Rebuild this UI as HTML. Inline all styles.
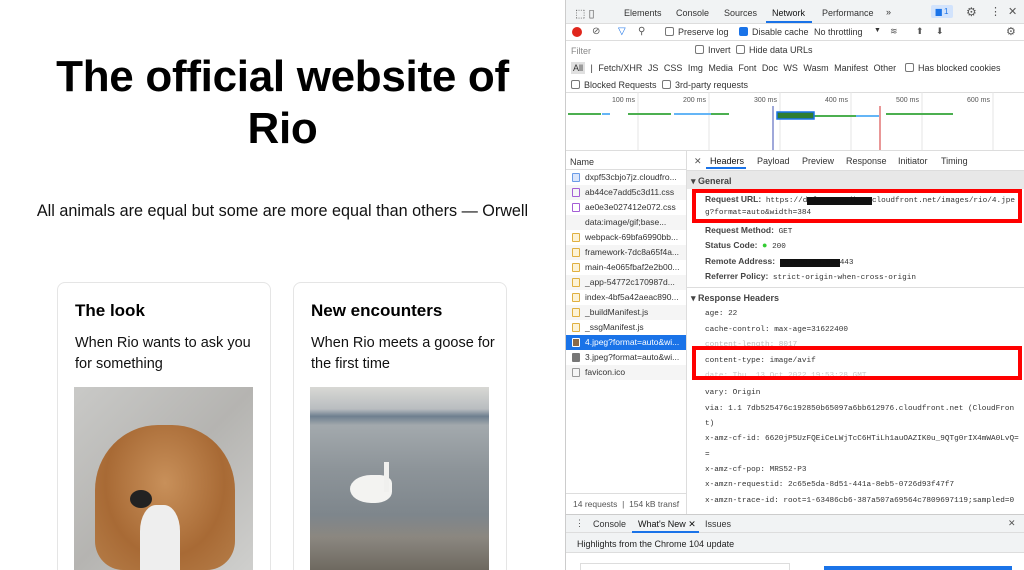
<!DOCTYPE html>
<html><head><meta charset="utf-8"><style>
*{margin:0;padding:0;box-sizing:border-box}
html,body{width:1024px;height:570px;overflow:hidden}
body{background:#fff;font-family:"Liberation Sans",sans-serif;position:relative;color:#202124}
.a{position:absolute;white-space:nowrap}
.h1{left:0;width:565px;text-align:center;font-weight:bold;font-size:44px;color:#000;letter-spacing:-0.3px}
.card{position:absolute;top:282px;width:214px;height:300px;border:1px solid #e5e5e5;border-radius:8px;background:#fff}
.card h3{position:absolute;left:17px;top:18px;font-size:17px;font-weight:bold;color:#000}
.card p{position:absolute;left:17px;top:50px;font-size:14.5px;line-height:21px;color:#111;width:190px}
.dt{font-size:9px;color:#333}
.cb{display:inline-block;width:9px;height:9px;border:1px solid #777;border-radius:2px;vertical-align:-1px;margin-right:4px}
.row{position:absolute;left:566px;width:120px;height:15px;font-size:8.5px;color:#333;padding-left:19px;line-height:15px;white-space:nowrap}
.row i{position:absolute;left:6px;top:3px;width:8px;height:9px;border:1px solid;border-radius:1px}
.hl{position:absolute;left:705px;font-size:7.7px;color:#333;font-family:"Liberation Mono",monospace;white-space:nowrap}
.hl b{font-weight:bold;color:#444;font-family:"Liberation Sans",sans-serif;font-size:8.5px}
</style></head><body>
<div style="position:absolute;left:565px;top:0;width:1px;height:570px;background:#ccc"></div>
<div class="a h1" style="top:52px">The official website of</div>
<div class="a h1" style="top:104px">Rio</div>
<div class="a" style="left:0;width:565px;text-align:center;top:202px;font-size:16.2px;color:#111">All animals are equal but some are more equal than others — Orwell</div>
<div class="card" style="left:57px"><h3>The look</h3><p>When Rio wants to ask you for something</p></div>
<div class="card" style="left:293px"><h3>New encounters</h3><p>When Rio meets a goose for the first time</p></div>
<div class="a" style="left:74px;top:387px;width:179px;height:183px;background:linear-gradient(135deg,#c9c9c7,#b5b4b1 50%,#cfcfcd)"></div>
<div class="a" style="left:95px;top:425px;width:140px;height:145px;border-radius:45% 45% 20% 20%;background:radial-gradient(ellipse at 50% 40%,#c8905a,#a86a35 60%,#b57d48)"></div>
<div class="a" style="left:140px;top:505px;width:40px;height:65px;background:#eee;border-radius:40% 40% 0 0"></div>
<div class="a" style="left:130px;top:490px;width:22px;height:18px;background:#222;border-radius:50%"></div>
<div class="a" style="left:310px;top:387px;width:179px;height:183px;background:linear-gradient(180deg,#d8d8d4 0%,#b9bdc0 12%,#6e7f8f 16%,#a3a9ad 21%,#8d9499 45%,#7e868c 70%,#8b8780 82%,#6e6960 100%)"></div>
<div class="a" style="left:350px;top:475px;width:42px;height:28px;background:#f3f3f1;border-radius:50% 30% 40% 50%"></div>
<div class="a" style="left:384px;top:462px;width:5px;height:30px;background:#f0f0ee"></div>

<div class="a" style="left:566px;top:0;width:458px;height:24px;background:#f1f3f4;border-bottom:1px solid #ddd"></div>
<div class="a dt" style="left:575px;top:7px;font-size:11px;color:#555">⬚ ▯</div>
<div class="a dt" style="left:624px;top:8px">Elements</div>
<div class="a dt" style="left:676px;top:8px">Console</div>
<div class="a dt" style="left:724px;top:8px">Sources</div>
<div class="a dt" style="left:772px;top:8px;color:#111">Network</div>
<div class="a" style="left:766px;top:21px;width:46px;height:2px;background:#1a73e8"></div>
<div class="a dt" style="left:822px;top:8px">Performance</div>
<div class="a dt" style="left:886px;top:7px">»</div>
<div class="a" style="left:931px;top:5px;width:22px;height:13px;background:#d2e3fc;border-radius:2px;font-size:8px;color:#1a73e8;text-align:center;line-height:13px">▆ 1</div>
<div class="a dt" style="left:966px;top:5px;font-size:12px;color:#555">⚙</div>
<div class="a dt" style="left:990px;top:5px;font-size:11px;color:#555">⋮</div>
<div class="a dt" style="left:1008px;top:5px;font-size:11px;color:#555">✕</div>

<div class="a" style="left:566px;top:24px;width:458px;height:17px;border-bottom:1px solid #ddd"></div>
<div class="a" style="left:572px;top:27px;width:10px;height:10px;border-radius:50%;background:#e0261c"></div>
<div class="a dt" style="left:592px;top:26px;font-size:10px;color:#555">⊘</div>
<div class="a dt" style="left:618px;top:26px;font-size:10px;color:#1a73e8">▽</div>
<div class="a dt" style="left:638px;top:26px;font-size:10px;color:#555">⚲</div>
<div class="a dt" style="left:665px;top:27px"><span class="cb"></span>Preserve log</div>
<div class="a dt" style="left:739px;top:27px"><span class="cb" style="background:#1a73e8;border-color:#1a73e8"></span>Disable cache</div>
<div class="a dt" style="left:814px;top:27px">No throttling</div>
<div class="a dt" style="left:874px;top:27px;font-size:7px">▼</div>
<div class="a dt" style="left:890px;top:26px;color:#555">≋</div>
<div class="a dt" style="left:916px;top:26px;color:#555">⬆</div>
<div class="a dt" style="left:936px;top:26px;color:#555">⬇</div>
<div class="a dt" style="left:1006px;top:25px;font-size:11px;color:#555">⚙</div>

<div class="a dt" style="left:571px;top:46px;color:#888">Filter</div>
<div class="a dt" style="left:695px;top:45px"><span class="cb"></span>Invert</div>
<div class="a dt" style="left:736px;top:45px"><span class="cb"></span>Hide data URLs</div>
<div class="a dt" style="left:571px;top:63px;word-spacing:3px"><span style="background:#e0e0e0;padding:1px 2px">All</span> | Fetch/XHR JS CSS Img Media Font Doc WS Wasm Manifest Other</div>
<div class="a dt" style="left:905px;top:63px"><span class="cb"></span>Has blocked cookies</div>
<div class="a dt" style="left:571px;top:80px"><span class="cb"></span>Blocked Requests</div>
<div class="a dt" style="left:662px;top:80px"><span class="cb"></span>3rd-party requests</div>
<div class="a" style="left:566px;top:92px;width:458px;height:1px;background:#ddd"></div>
<div class="a" style="left:566px;top:92px;width:458px;height:58px">
<svg width="458" height="58"><g stroke="#e4e4e4"><line x1="72" y1="0" x2="72" y2="58"/><line x1="143" y1="0" x2="143" y2="58"/><line x1="214" y1="0" x2="214" y2="58"/><line x1="285" y1="0" x2="285" y2="58"/><line x1="356" y1="0" x2="356" y2="58"/><line x1="427" y1="0" x2="427" y2="58"/></g>
<g font-size="7" fill="#555" font-family="Liberation Sans"><text x="46" y="10">100 ms</text><text x="117" y="10">200 ms</text><text x="188" y="10">300 ms</text><text x="259" y="10">400 ms</text><text x="330" y="10">500 ms</text><text x="401" y="10">600 ms</text></g>
<g stroke-width="2"><line x1="2" y1="22" x2="35" y2="22" stroke="#4caf50"/><line x1="36" y1="22" x2="44" y2="22" stroke="#64b5f6"/><line x1="62" y1="22" x2="105" y2="22" stroke="#4caf50"/><line x1="108" y1="22" x2="145" y2="22" stroke="#64b5f6"/><line x1="145" y1="22" x2="163" y2="22" stroke="#4caf50"/><line x1="214" y1="24" x2="290" y2="24" stroke="#4caf50"/><line x1="290" y1="24" x2="313" y2="24" stroke="#64b5f6"/><line x1="320" y1="22" x2="387" y2="22" stroke="#4caf50"/></g>
<rect x="211" y="20" width="37" height="7" fill="#2e7d32" stroke="#1a73e8" stroke-width="1.5"/>
<line x1="207" y1="14" x2="207" y2="58" stroke="#3f51b5"/><line x1="314" y1="14" x2="314" y2="58" stroke="#d32f2f"/></svg></div>

<div class="a" style="left:566px;top:150px;width:458px;height:1px;background:#ddd"></div>
<div class="a" style="left:686px;top:150px;width:1px;height:365px;background:#ddd"></div>
<div class="a dt" style="left:570px;top:157px">Name</div>
<div class="a" style="left:566px;top:169px;width:120px;height:1px;background:#ddd"></div>
<div class="row" style="top:170px"><i style="border-color:#6a9be8;background:#dbe6fb"></i>dxpf53cbjo7jz.cloudfro...</div>
<div class="row" style="top:185px;background:#f5f5f5"><i style="border-color:#a45ed6"></i>ab44ce7add5c3d11.css</div>
<div class="row" style="top:200px"><i style="border-color:#a45ed6"></i>ae0e3e027412e072.css</div>
<div class="row" style="top:215px;background:#f5f5f5">data:image/gif;base...</div>
<div class="row" style="top:230px"><i style="border-color:#e0b040;background:#fdf3d6"></i>webpack-69bfa6990bb...</div>
<div class="row" style="top:245px;background:#f5f5f5"><i style="border-color:#e0b040;background:#fdf3d6"></i>framework-7dc8a65f4a...</div>
<div class="row" style="top:260px"><i style="border-color:#e0b040;background:#fdf3d6"></i>main-4e065fbaf2e2b00...</div>
<div class="row" style="top:275px;background:#f5f5f5"><i style="border-color:#e0b040;background:#fdf3d6"></i>_app-54772c170987d...</div>
<div class="row" style="top:290px"><i style="border-color:#e0b040;background:#fdf3d6"></i>index-4bf5a42aeac890...</div>
<div class="row" style="top:305px;background:#f5f5f5"><i style="border-color:#e0b040;background:#fdf3d6"></i>_buildManifest.js</div>
<div class="row" style="top:320px"><i style="border-color:#e0b040;background:#fdf3d6"></i>_ssgManifest.js</div>
<div class="row" style="top:335px;background:#1a73e8;color:#fff"><i style="border-color:#fff;background:#8a6a4a"></i>4.jpeg?format=auto&amp;wi...</div>
<div class="row" style="top:350px"><i style="border-color:#777;background:#777"></i>3.jpeg?format=auto&amp;wi...</div>
<div class="row" style="top:365px;background:#f5f5f5"><i style="border-color:#999"></i>favicon.ico</div>
<div class="a" style="left:566px;top:493px;width:120px;height:1px;background:#ddd"></div>
<div class="a dt" style="left:573px;top:499px;font-size:8.5px;color:#555">14 requests &nbsp;|&nbsp; 154 kB transf</div>

<div class="a dt" style="left:694px;top:156px;color:#555">✕</div>
<div class="a dt" style="left:710px;top:156px;color:#111">Headers</div>
<div class="a" style="left:706px;top:167px;width:40px;height:2px;background:#1a73e8"></div>
<div class="a dt" style="left:757px;top:156px">Payload</div>
<div class="a dt" style="left:802px;top:156px">Preview</div>
<div class="a dt" style="left:846px;top:156px">Response</div>
<div class="a dt" style="left:898px;top:156px">Initiator</div>
<div class="a dt" style="left:941px;top:156px">Timing</div>
<div class="a" style="left:687px;top:170px;width:337px;height:1px;background:#ddd"></div>
<div class="a" style="left:687px;top:171px;width:337px;height:18px;background:#e8e8e8"></div>
<div class="a dt" style="left:691px;top:176px;font-weight:bold;color:#444">▾ General</div>
<div class="a" style="left:692px;top:189px;width:330px;height:34px;border:4px solid #f00"></div>
<div class="hl" style="top:194px"><b>Request URL:</b> https://d<span style="background:#111;color:#111">2f6xxxx00ibe0x</span>cloudfront.net/images/rio/4.jpe</div>
<div class="hl" style="top:209px">g?format=auto&amp;width=384</div>
<div class="hl" style="top:225px"><b>Request Method:</b> GET</div>
<div class="hl" style="top:240px"><b>Status Code:</b> <span style="color:#3c3;font-size:9px">●</span> 200</div>
<div class="hl" style="top:256px"><b>Remote Address:</b> <span style="background:#111;color:#111">00.000.00.000</span>443</div>
<div class="hl" style="top:271px"><b>Referrer Policy:</b> strict-origin-when-cross-origin</div>
<div class="a" style="left:687px;top:287px;width:337px;height:1px;background:#ddd"></div>
<div class="a dt" style="left:691px;top:293px;font-weight:bold;color:#444">▾ Response Headers</div>
<div class="hl" style="top:310px">age: 22</div>
<div class="hl" style="top:326px">cache-control: max-age=31622400</div>
<div class="hl" style="top:341px;color:#bbb">content-length: 8017</div>
<div class="hl" style="top:372px;color:#777">date: Thu, 13 Oct 2022 19:53:28 GMT</div>
<div class="a" style="left:692px;top:346px;width:330px;height:34px;border:4px solid #f00;background:rgba(255,255,255,0.6)"></div>
<div class="hl" style="top:357px">content-type: image/avif</div>
<div class="hl" style="top:389px">vary: Origin</div>
<div class="hl" style="top:405px">via: 1.1 7db525476c192850b65097a6bb612976.cloudfront.net (CloudFron</div>
<div class="hl" style="top:420px">t)</div>
<div class="hl" style="top:435px">x-amz-cf-id: 6620jP5UzFQEiCeLWjTcC6HTiLh1auOAZIK0u_9QTg0rIX4mWA0LvQ=</div>
<div class="hl" style="top:451px">=</div>
<div class="hl" style="top:466px">x-amz-cf-pop: MRS52-P3</div>
<div class="hl" style="top:481px">x-amzn-requestid: 2c65e5da-8d51-441a-8eb5-0726d93f47f7</div>
<div class="hl" style="top:497px">x-amzn-trace-id: root=1-63486cb6-387a507a69564c7809697119;sampled=0</div>

<div class="a" style="left:566px;top:514px;width:458px;height:19px;background:#f1f3f4;border-top:1px solid #ccc;border-bottom:1px solid #ddd"></div>
<div class="a dt" style="left:575px;top:518px;color:#555">⋮</div>
<div class="a dt" style="left:593px;top:519px">Console</div>
<div class="a dt" style="left:638px;top:519px;color:#111">What's New ✕</div>
<div class="a" style="left:632px;top:531px;width:67px;height:2px;background:#1a73e8"></div>
<div class="a dt" style="left:705px;top:519px">Issues</div>
<div class="a dt" style="left:1008px;top:518px;color:#555">✕</div>
<div class="a" style="left:566px;top:533px;width:458px;height:20px;background:#f1f3f4;border-bottom:1px solid #ddd"></div>
<div class="a dt" style="left:577px;top:539px;color:#222">Highlights from the Chrome 104 update</div>
<div class="a" style="left:580px;top:563px;width:210px;height:8px;border:1px solid #ddd"></div>
<div class="a" style="left:824px;top:566px;width:188px;height:4px;background:#1a73e8"></div>
</body></html>
